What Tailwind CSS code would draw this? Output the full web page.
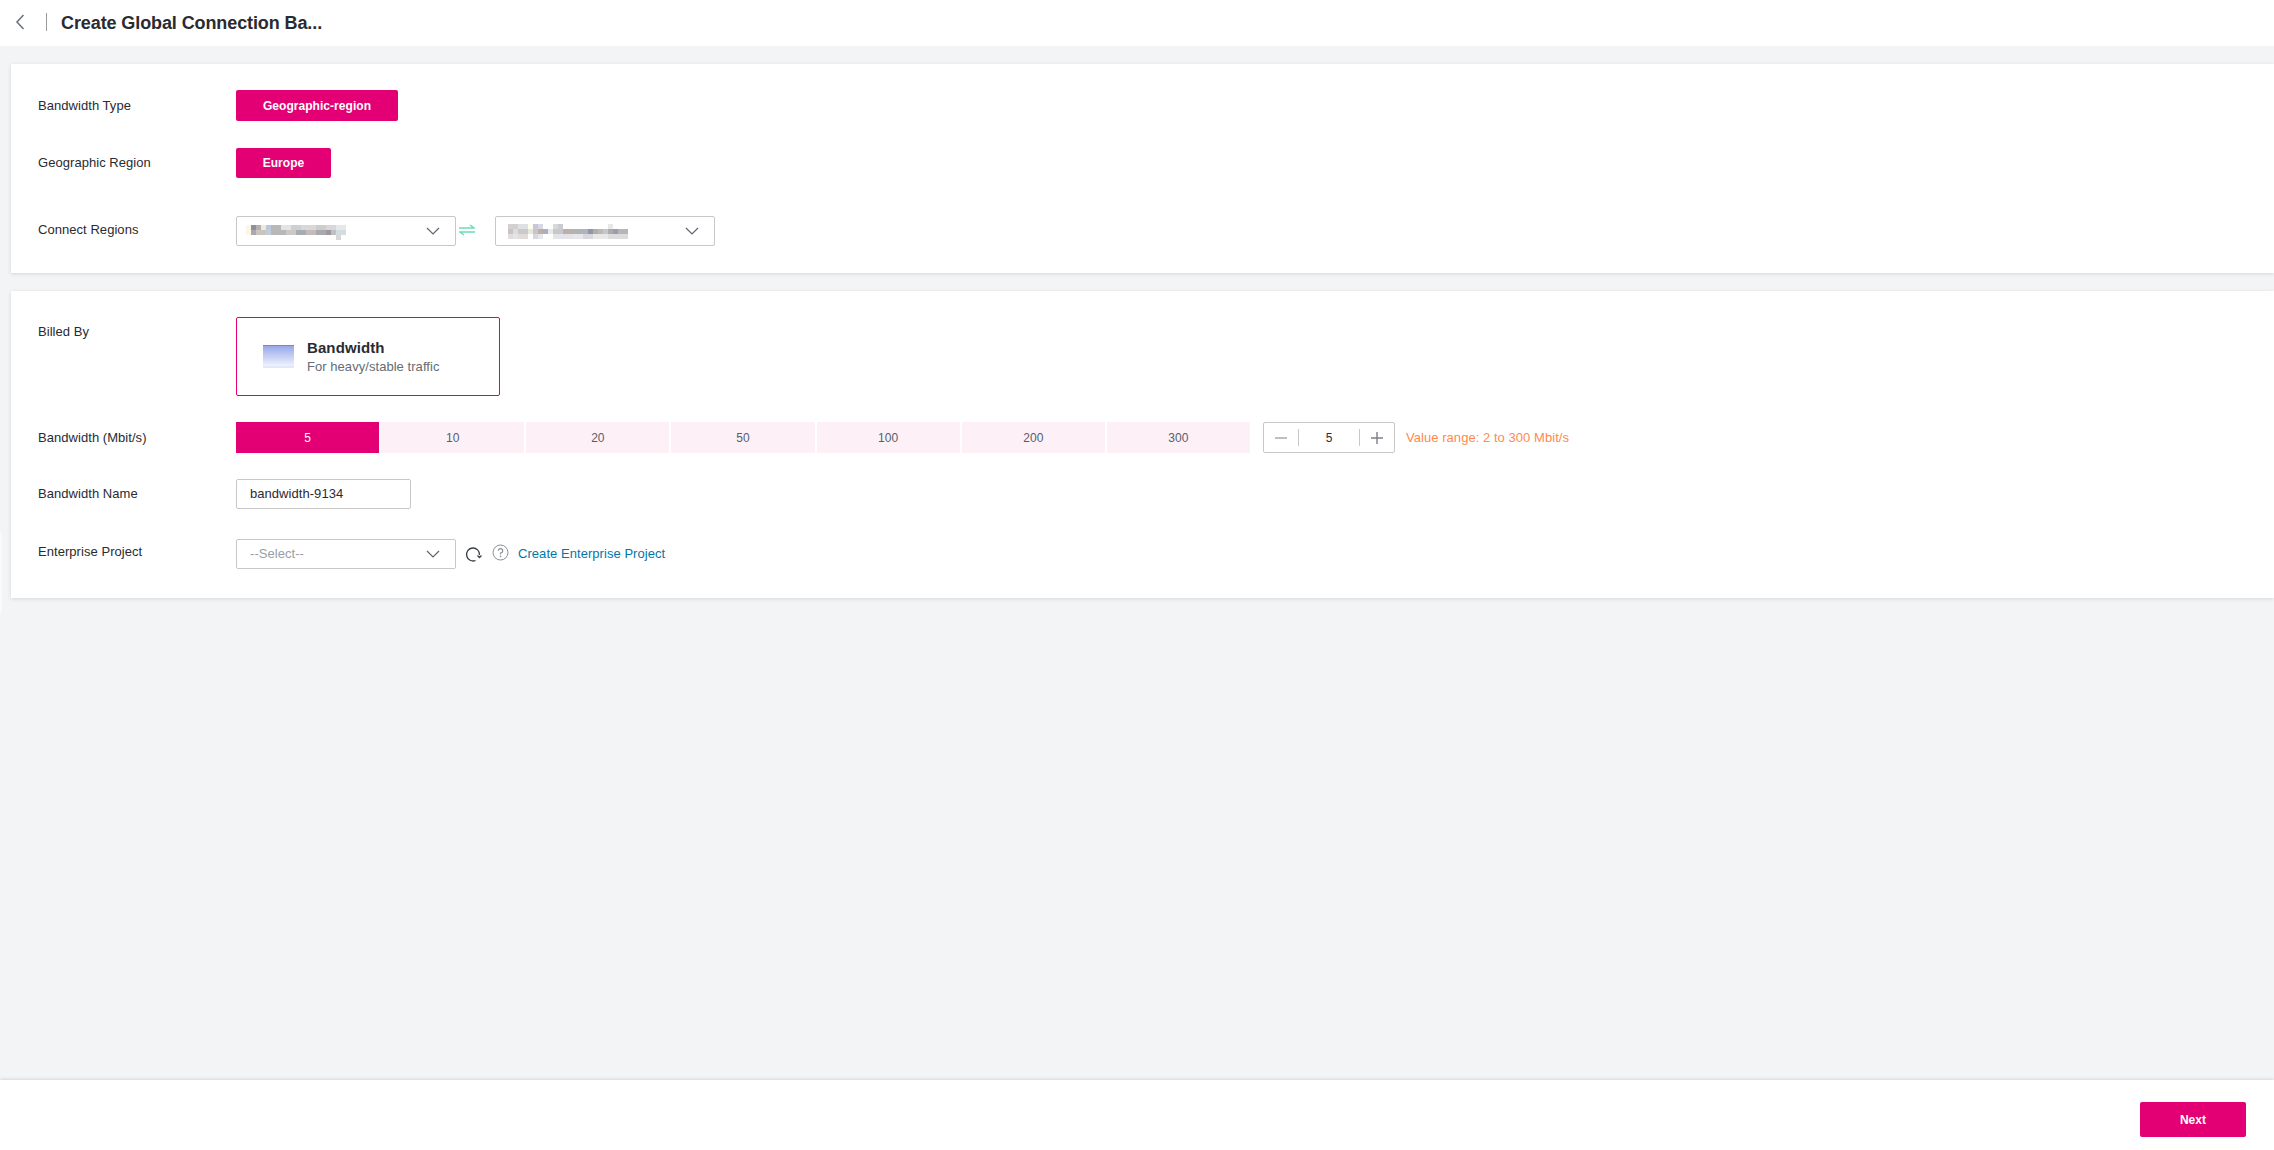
<!doctype html>
<html lang="en">
<head>
<meta charset="UTF-8">
<title>Create Global Connection Bandwidth</title>
<script src="https://cdn.jsdelivr.net/npm/@tailwindcss/browser@4"></script>
</head>
<body class="font-['Liberation_Sans',Arial,sans-serif] text-[13px] tracking-[0.05px] text-[#2a2b30] bg-[#f3f4f6]">
<div class="relative h-[1150px] flex flex-col overflow-hidden">
    <div class="absolute left-0 top-[532px] w-[2px] h-[81px] bg-[#fafafb] rounded-r-[2px]"></div>
    <header class="h-[46px] bg-white flex items-center shrink-0">
        <svg class="ml-[14px] mb-[2px] w-[12px] h-[18px]" viewBox="0 0 12 18" fill="none" stroke="#6f7580" stroke-width="1.6"><path d="M9.5 2 L3 9 L9.5 16"/></svg>
        <div class="ml-[20px] mb-[2px] w-px h-[18px] bg-[#999999]"></div>
        <h1 class="ml-[14px] text-[18px] tracking-[-0.1px] font-bold leading-none mb-[1px]">Create Global Connection Ba...</h1>
    </header>

    <main class="flex-1 pl-[11px] pt-[18px]">
        <section class="bg-white h-[209px] shadow-[0_1px_4px_rgba(0,0,0,0.12)] pl-[27px]">
            <div class="flex items-center h-[31px] pt-[26px] box-content">
                <label class="w-[198px]">Bandwidth Type</label>
                <button class="w-[162px] h-[31px] bg-[#e20074] text-white text-xs font-bold rounded-[2px]">Geographic-region</button>
            </div>
            <div class="flex items-center h-[30px] mt-[27px]">
                <label class="w-[198px]">Geographic Region</label>
                <button class="w-[95px] h-[30px] bg-[#e20074] text-white text-xs font-bold rounded-[2px]">Europe</button>
            </div>
            <div class="flex items-center h-[30px] mt-[38px]">
                <label class="w-[198px] mb-[2px]">Connect Regions</label>
                <div class="w-[220px] h-[30px] border border-[#c8c8c8] rounded-[2px] flex items-center justify-between pl-[9px] pr-[15px]">
                    <svg class="w-[105px] h-[15px] mt-[3px]" viewBox="0 0 21 3" shape-rendering="crispEdges">
                        <rect x="0" y="0" width="1" height="2" fill="#fdf6e8"/>
                        <rect x="1" y="0" width="1" height="1" fill="#8f8f99"/><rect x="2" y="0" width="1" height="1" fill="#b4b0ac"/><rect x="3" y="0" width="1" height="1" fill="#f0e8d8"/><rect x="4" y="0" width="1" height="1" fill="#b8c8e0"/><rect x="5" y="0" width="2" height="1" fill="#b8b8b8"/><rect x="7" y="0" width="2" height="1" fill="#e2e4e8"/><rect x="9" y="0" width="2" height="1" fill="#ccd0d0"/><rect x="11" y="0" width="3" height="1" fill="#d8d8d8"/><rect x="14" y="0" width="2" height="1" fill="#d0ccc8"/><rect x="16" y="0" width="2" height="1" fill="#d8d8dc"/><rect x="18" y="0" width="2" height="1" fill="#e4e8e8"/>
                        <rect x="1" y="1" width="1" height="1" fill="#a8a8b0"/><rect x="2" y="1" width="2" height="1" fill="#c8c4c0"/><rect x="4" y="1" width="1" height="1" fill="#c4ccd8"/><rect x="5" y="1" width="3" height="1" fill="#b8b8b8"/><rect x="8" y="1" width="2" height="1" fill="#ccc8c4"/><rect x="10" y="1" width="2" height="1" fill="#a8acb4"/><rect x="12" y="1" width="2" height="1" fill="#c4bcb8"/><rect x="14" y="1" width="2" height="1" fill="#a8a8b0"/><rect x="16" y="1" width="1" height="1" fill="#a09898"/><rect x="17" y="1" width="1" height="1" fill="#c0c0c4"/><rect x="18" y="1" width="2" height="1" fill="#d4dce0"/>
                        <rect x="18" y="2" width="1" height="1" fill="#d8d8d8"/>
                    </svg>
                    <svg class="w-[14px] h-[8px]" viewBox="0 0 14 8" fill="none" stroke="#5f6470" stroke-width="1.2"><path d="M1 1 L7 7 L13 1"/></svg>
                </div>
                <svg class="w-[16px] h-[12px] ml-[3px] mb-[3px]" viewBox="0 0 16 12" fill="none" stroke="#6fdcb8" stroke-width="1.5"><path d="M0 4 H15 L11 1"/><path d="M16 8 H1 L5 11"/></svg>
                <div class="w-[220px] h-[30px] ml-[20px] border border-[#c8c8c8] rounded-[2px] flex items-center justify-between pl-[12px] pr-[15px]">
                    <svg class="w-[125px] h-[15px]" viewBox="0 0 25 3" shape-rendering="crispEdges">
                        <rect x="0" y="0" width="2" height="1" fill="#d4d0d0"/><rect x="2" y="0" width="2" height="1" fill="#dfe0e4"/><rect x="4" y="0" width="1" height="1" fill="#fdfdf0"/><rect x="5" y="0" width="1" height="1" fill="#c8c8d4"/><rect x="6" y="0" width="1" height="1" fill="#d8d8e4"/><rect x="9" y="0" width="1" height="1" fill="#d8d8d8"/><rect x="10" y="0" width="1" height="1" fill="#c8ccd0"/><rect x="20" y="0" width="1" height="1" fill="#e8e8e8"/>
                        <rect x="0" y="1" width="1" height="1" fill="#c8c4c4"/><rect x="1" y="1" width="1" height="1" fill="#d8dfe0"/><rect x="2" y="1" width="2" height="1" fill="#ccc8cc"/><rect x="4" y="1" width="1" height="1" fill="#e8e8d8"/><rect x="5" y="1" width="1" height="1" fill="#c8c4cc"/><rect x="6" y="1" width="1" height="1" fill="#bcb0a4"/><rect x="7" y="1" width="1" height="1" fill="#a8b0bc"/><rect x="8" y="1" width="1" height="1" fill="#e8e8e8"/><rect x="9" y="1" width="2" height="1" fill="#c8c8cc"/><rect x="11" y="1" width="2" height="1" fill="#b8b0ac"/><rect x="13" y="1" width="3" height="1" fill="#b0b4b8"/><rect x="16" y="1" width="1" height="1" fill="#8f98a8"/><rect x="17" y="1" width="1" height="1" fill="#b4aca8"/><rect x="18" y="1" width="1" height="1" fill="#c0b8b4"/><rect x="19" y="1" width="1" height="1" fill="#c0c8d0"/><rect x="20" y="1" width="1" height="1" fill="#b0aab0"/><rect x="21" y="1" width="1" height="1" fill="#9a9cb0"/><rect x="22" y="1" width="2" height="1" fill="#b8b4b8"/>
                        <rect x="0" y="2" width="1" height="1" fill="#e0dedc"/><rect x="1" y="2" width="1" height="1" fill="#e4e4e4"/><rect x="2" y="2" width="2" height="1" fill="#e0dcdc"/><rect x="5" y="2" width="1" height="1" fill="#d8d8dc"/><rect x="6" y="2" width="1" height="1" fill="#e4e8ec"/><rect x="9" y="2" width="4" height="1" fill="#e4e4e8"/><rect x="13" y="2" width="2" height="1" fill="#e8e8ec"/><rect x="15" y="2" width="2" height="1" fill="#d8d8dc"/><rect x="17" y="2" width="3" height="1" fill="#e8e8e8"/><rect x="20" y="2" width="4" height="1" fill="#dcdcdc"/>
                    </svg>
                    <svg class="w-[14px] h-[8px]" viewBox="0 0 14 8" fill="none" stroke="#5f6470" stroke-width="1.2"><path d="M1 1 L7 7 L13 1"/></svg>
                </div>
            </div>
        </section>

        <section class="bg-white h-[307px] mt-[18px] shadow-[0_1px_4px_rgba(0,0,0,0.12)] pl-[27px] pt-[26px]">
            <div class="flex items-start h-[79px]">
                <label class="w-[198px] pt-[5px]">Billed By</label>
                <div class="w-[264px] h-[79px] border border-[#e20074] rounded-[2px] flex items-center pl-[26px]">
                    <div class="w-[31px] h-[23px] border-t border-[#6f86dc] bg-linear-to-b from-[#98a8e8] to-[#f0f3fd] border-b-2 border-b-[#e2e8fb]"></div>
                    <div class="ml-[13px] mb-[1px]">
                        <div class="text-[15px] tracking-[0.1px] font-bold leading-[18px]">Bandwidth</div>
                        <div class="text-[#666b74] leading-[14px] mt-[3px]">For heavy/stable traffic</div>
                    </div>
                </div>
            </div>
            <div class="flex items-center h-[31px] mt-[26px]">
                <label class="w-[198px]">Bandwidth (Mbit/s)</label>
                <div class="flex gap-[2px] w-[1014px] text-xs">
                    <div class="flex-1 h-[31px] bg-[#e20074] text-white flex items-center justify-center">5</div>
                    <div class="flex-1 h-[31px] bg-[#fdf0f7] text-[#575d6c] flex items-center justify-center">10</div>
                    <div class="flex-1 h-[31px] bg-[#fdf0f7] text-[#575d6c] flex items-center justify-center">20</div>
                    <div class="flex-1 h-[31px] bg-[#fdf0f7] text-[#575d6c] flex items-center justify-center">50</div>
                    <div class="flex-1 h-[31px] bg-[#fdf0f7] text-[#575d6c] flex items-center justify-center">100</div>
                    <div class="flex-1 h-[31px] bg-[#fdf0f7] text-[#575d6c] flex items-center justify-center">200</div>
                    <div class="flex-1 h-[31px] bg-[#fdf0f7] text-[#575d6c] flex items-center justify-center">300</div>
                </div>
                <div class="ml-[13px] w-[132px] h-[31px] border border-[#c8c8c8] rounded-[2px] flex items-center text-xs">
                    <div class="w-[35px] h-[17px] border-r border-[#c8c8c8] flex items-center justify-center"><svg class="w-[14px] h-[14px]" viewBox="0 0 14 14" stroke="#a0a4ac" stroke-width="1.4"><path d="M1 7 H13"/></svg></div>
                    <div class="w-[61px] h-[17px] border-r border-[#c8c8c8] flex items-center justify-center">5</div>
                    <div class="flex-1 flex items-center justify-center"><svg class="w-[14px] h-[14px]" viewBox="0 0 14 14" stroke="#7c808a" stroke-width="1.4"><path d="M1 7 H13 M7 1 V13"/></svg></div>
                </div>
                <span class="ml-[11px] text-[#ff8a4c]">Value range: 2 to 300 Mbit/s</span>
            </div>
            <div class="flex items-center h-[30px] mt-[26px]">
                <label class="w-[198px]">Bandwidth Name</label>
                <div class="w-[175px] h-[30px] border border-[#c8c8c8] rounded-[2px] flex items-center pl-[13px]">bandwidth-9134</div>
            </div>
            <div class="flex items-center h-[30px] mt-[30px]">
                <label class="w-[198px] mb-[5px]">Enterprise Project</label>
                <div class="w-[220px] h-[30px] border border-[#c8c8c8] rounded-[2px] flex items-center justify-between pl-[13px] pr-[15px] text-[#9a9ea6]">
                    --Select--
                    <svg class="w-[14px] h-[8px]" viewBox="0 0 14 8" fill="none" stroke="#5f6470" stroke-width="1.2"><path d="M1 1 L7 7 L13 1"/></svg>
                </div>
                <svg class="ml-[9px] w-[17px] h-[17px]" viewBox="0 0 17 17" fill="none" stroke="#3a3f4a" stroke-width="1.3"><path d="M10.5 14.5 A6.5 6.5 0 1 1 14.5 9"/><path d="M12.5 9.5 L14.5 11.5 L16.5 9.5"/></svg>
                <svg class="ml-[10px] mb-[4px] w-[17px] h-[17px]" viewBox="0 0 17 17" fill="none"><circle cx="8.5" cy="8.5" r="7.5" stroke="#8a8e96" stroke-width="1"/><path d="M6.3 6.8 A2.2 2.2 0 1 1 8.5 9 V10.5" stroke="#8a8e96" stroke-width="1.1"/><circle cx="8.5" cy="12.4" r="0.8" fill="#8a8e96"/></svg>
                <a class="ml-[9px] text-[#0077a8]">Create Enterprise Project</a>
            </div>
        </section>
    </main>

    <footer class="h-[70px] bg-white shadow-[0_-1px_3px_rgba(0,0,0,0.12)] shrink-0 flex justify-end items-start pt-[22px] pr-[28px]">
        <button class="w-[106px] h-[35px] bg-[#e20074] text-white text-xs font-bold rounded-[2px]">Next</button>
    </footer>
</div>
</body>
</html>
